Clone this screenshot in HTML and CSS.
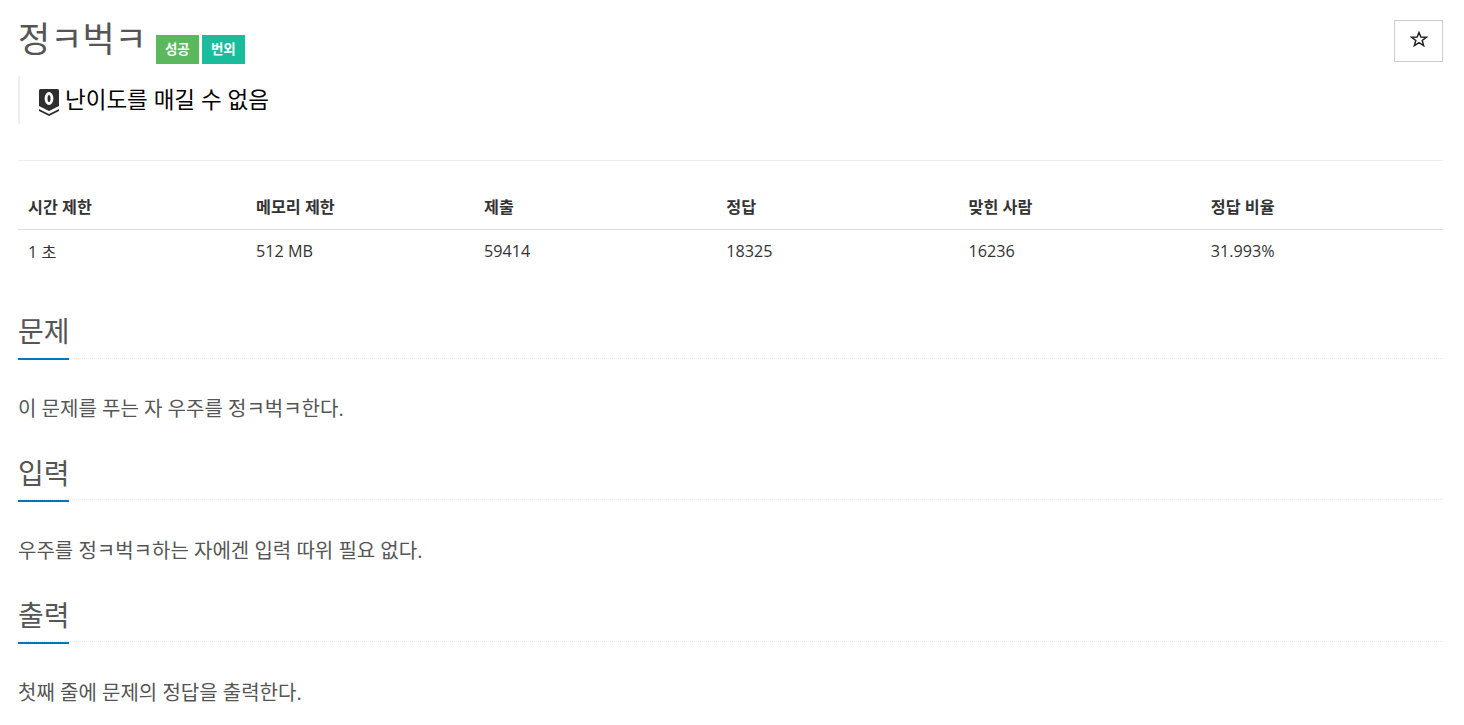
FILE: index.html
```html
<!DOCTYPE html>
<html lang="ko">
<head>
    <meta charset="UTF-8">
    <title>정ㅋ벅ㅋ</title>
    <link rel="stylesheet" href="styles.css">
</head>
<body>
    <div class="page">
        <div class="page-header">
            <div class="title-row">
                <h1 class="title">정ㅋ벅ㅋ</h1>
                <span class="badge badge-green">성공</span>
                <span class="badge badge-teal">번외</span>
            </div>
            <button class="star-button" type="button">
                <svg width="18" height="16" viewBox="0 0 18 16">
                    <path d="M9 1.5 10.9 6 16.5 6.2 12.2 9.5 13.6 14.6 9 11.7 4.4 14.6 5.8 9.5 1.5 6.2 7.1 6Z" fill="none" stroke="#222" stroke-width="1.5"/>
                </svg>
            </button>
        </div>

        <blockquote class="level">
            <svg class="level-icon" width="20" height="27" viewBox="0 0 20 27">
                <path d="M0 1.5Q0 0 1.5 0H18.5Q20 0 20 1.5V17L10 22 0 17Z" fill="#2d2d2d"/>
                <path d="M0 20 10 25 20 20V22L10 27 0 22Z" fill="#2d2d2d"/>
                <ellipse cx="10" cy="9.5" rx="4.4" ry="6.4" fill="#fff"/>
                <ellipse cx="10" cy="9.5" rx="1.5" ry="3.6" fill="#2d2d2d"/>
            </svg>
            <span>난이도를 매길 수 없음</span>
        </blockquote>

        <hr class="divider">

        <table class="info-table">
            <thead>
                <tr>
                    <th>시간 제한</th>
                    <th>메모리 제한</th>
                    <th>제출</th>
                    <th>정답</th>
                    <th>맞힌 사람</th>
                    <th>정답 비율</th>
                </tr>
            </thead>
            <tbody>
                <tr>
                    <td>1 초</td>
                    <td>512 MB</td>
                    <td>59414</td>
                    <td>18325</td>
                    <td>16236</td>
                    <td>31.993%</td>
                </tr>
            </tbody>
        </table>

        <section class="section">
            <div class="headline"><h2>문제</h2></div>
            <p>이 문제를 푸는 자 우주를 정ㅋ벅ㅋ한다.</p>
        </section>
        <section class="section">
            <div class="headline"><h2>입력</h2></div>
            <p>우주를 정ㅋ벅ㅋ하는 자에겐 입력 따위 필요 없다.</p>
        </section>
        <section class="section">
            <div class="headline"><h2>출력</h2></div>
            <p>첫째 줄에 문제의 정답을 출력한다.</p>
        </section>
    </div>
</body>
</html>
```

FILE: styles.css
```css
* {
    box-sizing: border-box;
}

body {
    margin: 0;
    background: #fff;
    color: #333;
    font-family: "Open Sans", "Noto Sans CJK KR", sans-serif;
    font-size: 16.2px;
    overflow: hidden;
}

.page {
    padding: 20px 21px 0 18px;
}

.page-header {
    display: flex;
    justify-content: space-between;
    align-items: flex-start;
}

.title-row {
    display: flex;
    align-items: flex-start;
    gap: 3px;
}

.title {
    margin: 0 6px 0 0;
    font-size: 35px;
    font-weight: 400;
    line-height: 38px;
    color: #555;
}

.badge {
    margin-top: 15px;
    width: 43px;
    height: 29px;
    line-height: 29px;
    text-align: center;
    color: #fff;
    font-size: 13.5px;
    font-weight: 700;
}

.badge-green {
    background: #5cb85c;
}

.badge-teal {
    background: #1abc9c;
}

.star-button {
    width: 49px;
    height: 42px;
    padding: 0 0 5px;
    background: #fff;
    border: 1px solid #ccc;
    display: flex;
    align-items: center;
    justify-content: center;
}

.level {
    margin: 12px 0 0;
    height: 48px;
    padding: 0 0 4px 19px;
    border-left: 2px solid #eee;
    display: flex;
    align-items: center;
    gap: 6px;
    color: #000;
    font-size: 22.5px;
}

.level-icon {
    margin-top: 9px;
}

.divider {
    margin: 36px 0 0;
    border: 0;
    border-top: 1px solid #eee;
}

.info-table {
    margin-top: 25px;
    width: 100%;
    border-collapse: collapse;
    table-layout: fixed;
}

.info-table th,
.info-table td {
    padding: 0 10px;
    text-align: left;
    vertical-align: middle;
}

.info-table th {
    height: 43px;
    padding-bottom: 2px;
    border-bottom: 1px solid #ddd;
    font-weight: 700;
    color: #333;
}

.info-table td {
    height: 43px;
}

.info-table th:nth-child(-n+2) {
    width: 228px;
}

.info-table + .section {
    margin-top: 28px;
}

.headline {
    height: 59px;
    border-bottom: 1px dotted #e8e8e8;
}

.section + .section .headline {
    height: 58px;
}

.headline h2 {
    display: inline-block;
    margin: 0;
    height: 60px;
    width: 51px;
    font-size: 28px;
    font-weight: 400;
    line-height: 62px;
    color: #555;
    white-space: nowrap;
    border-bottom: 2px solid #0076c0;
}

.section p {
    margin: 0;
    height: 83px;
    padding-top: 37px;
    font-size: 20px;
    line-height: 26px;
    color: #555;
}

.section + .section p {
    height: 84px;
    padding-top: 38px;
}
```
